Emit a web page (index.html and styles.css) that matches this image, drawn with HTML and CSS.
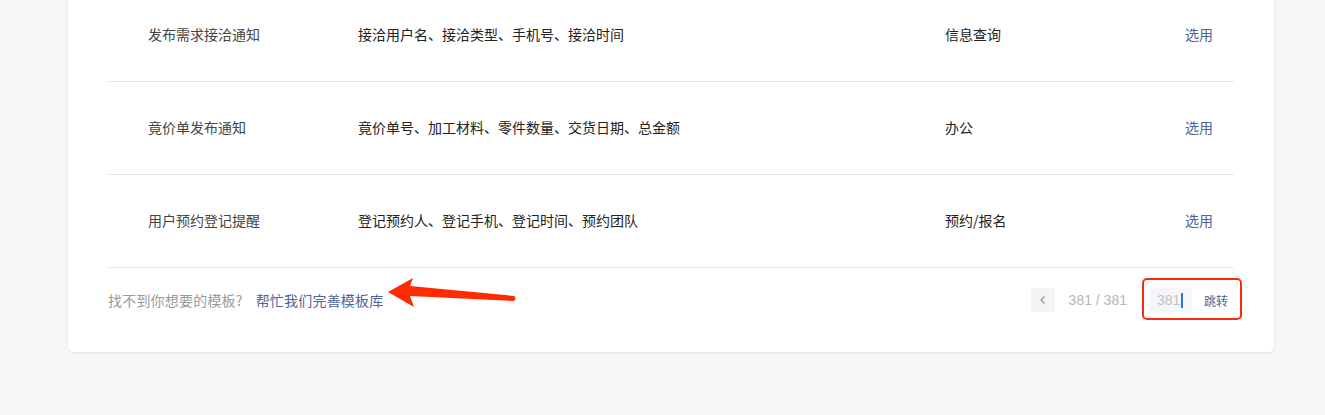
FILE: index.html
```html
<!DOCTYPE html>
<html lang="zh">
<head>
<meta charset="utf-8">
<title>模板库</title>
<link rel="stylesheet" href="styles.css">
</head>
<body>
<div class="page">
  <div class="card">
    <div class="table">
      <div class="row">
        <div class="cell c1">发布需求接洽通知</div>
        <div class="cell c2">接洽用户名、接洽类型、手机号、接洽时间</div>
        <div class="cell c3">信息查询</div>
        <div class="cell c4"><a class="link">选用</a></div>
      </div>
      <div class="row">
        <div class="cell c1">竟价单发布通知</div>
        <div class="cell c2">竟价单号、加工材料、零件数量、交货日期、总金额</div>
        <div class="cell c3">办公</div>
        <div class="cell c4"><a class="link">选用</a></div>
      </div>
      <div class="row">
        <div class="cell c1">用户预约登记提醒</div>
        <div class="cell c2">登记预约人、登记手机、登记时间、预约团队</div>
        <div class="cell c3">预约/报名</div>
        <div class="cell c4"><a class="link">选用</a></div>
      </div>
    </div>
    <div class="footer">
      <div class="hint">
        <span class="muted">找不到你想要的模板?</span>
        <a class="link help">帮忙我们完善模板库</a>
        <svg class="arrow" width="132" height="34" viewBox="0 0 132 34">
          <path d="M2 14 L27 0 L24 8 L128 18 Q131 20 128 23 L24 18 L28 29 Z" fill="#ff2a00"/>
        </svg>
      </div>
      <div class="pager">
        <button class="prev" aria-label="上一页">
          <svg width="10" height="10" viewBox="0 0 10 10"><path d="M6.5 1.5 L3 5 L6.5 8.5" fill="none" stroke="#8a8f99" stroke-width="1.2"/></svg>
        </button>
        <span class="count">381 / 381</span>
        <div class="jump">
          <div class="input"><span class="val">381</span><span class="caret"></span></div>
          <a class="link go">跳转</a>
          <div class="mark"></div>
        </div>
      </div>
    </div>
  </div>
</div>
</body>
</html>
```
FILE: styles.css
```css
* { box-sizing: border-box; }
html, body {
  margin: 0;
  padding: 0;
  background: #f5f6f8;
  font-family: "Noto Sans CJK SC", "Noto Sans", sans-serif;
  font-size: 14px;
  color: #222;
}
.page {
  padding: 0 51px 0 68px;
  height: 415px;
  overflow: hidden;
}
.card {
  margin-top: -11px;
  width: 1206px;
  background: #fff;
  border-radius: 0 0 5px 5px;
  box-shadow: 0 1px 3px rgba(0, 0, 0, 0.08);
  padding: 0 40px;
}
.row {
  display: grid;
  grid-template-columns: 250px 587px 240px 1fr;
  height: 93px;
  border-bottom: 1px solid #e6e7ea;
  align-items: center;
}
.cell { line-height: 20px; padding-bottom: 2px; }
.c1 { padding-left: 40px; color: #444; }
.c2 { color: #222; }
.c3 { color: #222; }
.link {
  color: #4f6398;
  cursor: pointer;
  text-decoration: none;
}
.footer {
  display: flex;
  justify-content: space-between;
  align-items: center;
  padding: 20px 0 40px;
}
.hint {
  position: relative;
  display: flex;
  align-items: center;
  height: 24px;
}
.muted { color: #9a9a9a; letter-spacing: 0.2px; }
.help { margin-left: 13px; letter-spacing: 0.2px; }
.arrow {
  position: absolute;
  left: 278px;
  top: -10px;
}
.pager {
  display: flex;
  align-items: center;
  height: 24px;
  padding-right: 6px;
}
.prev {
  width: 24px;
  height: 24px;
  border: none;
  border-radius: 2px;
  background: #f3f4f6;
  display: flex;
  align-items: center;
  justify-content: center;
  padding: 0;
}
.count {
  margin-left: 14px;
  color: #b5b7bb;
  font-family: "Liberation Sans", Arial, sans-serif;
  font-size: 14px;
}
.jump {
  position: relative;
  display: flex;
  align-items: center;
  margin-left: 23px;
}
.input {
  width: 42px;
  height: 24px;
  background: #f5f6f8;
  border-radius: 2px;
  display: flex;
  align-items: center;
  padding-left: 7px;
}
.val {
  color: #c0c3c8;
  font-family: "Liberation Sans", Arial, sans-serif;
  font-size: 14px;
}
.caret {
  width: 2px;
  height: 15px;
  background: #2f6fe8;
  margin-left: 1px;
}
.go {
  margin-left: 12px;
  font-size: 12px;
}
.mark {
  position: absolute;
  left: -8px;
  top: -10px;
  width: 100px;
  height: 42px;
  border: 2px solid #ff2a0a;
  border-radius: 5px;
}
```
